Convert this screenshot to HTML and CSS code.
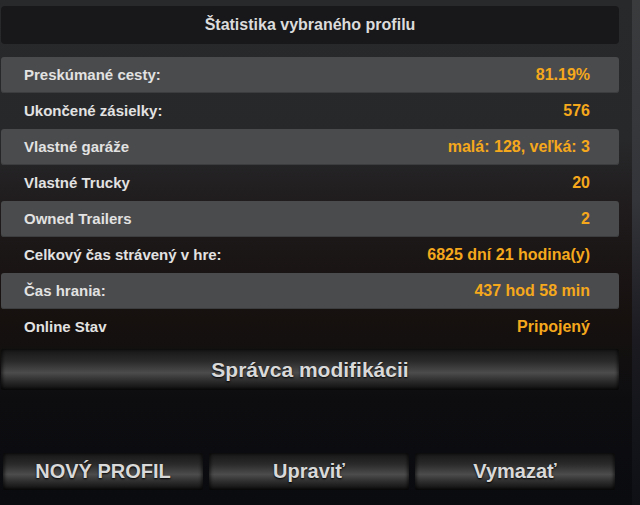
FILE: index.html
```html
<!DOCTYPE html>
<html lang="sk">
<head>
    <meta charset="UTF-8">
    <title>Štatistika profilu</title>
    <link rel="stylesheet" href="styles.css">
</head>
<body>
    <div class="screen">
        <div class="panel">
            <div class="title">Štatistika vybraného profilu</div>
            <div class="stats">
                <div class="row shaded"><span>Preskúmané cesty:</span><span class="value">81.19%</span></div>
                <div class="row"><span>Ukončené zásielky:</span><span class="value">576</span></div>
                <div class="row shaded"><span>Vlastné garáže</span><span class="value">malá: 128, veľká: 3</span></div>
                <div class="row"><span>Vlastné Trucky</span><span class="value">20</span></div>
                <div class="row shaded"><span>Owned Trailers</span><span class="value">2</span></div>
                <div class="row"><span>Celkový čas strávený v hre:</span><span class="value">6825 dní 21 hodina(y)</span></div>
                <div class="row shaded"><span>Čas hrania:</span><span class="value">437 hod 58 min</span></div>
                <div class="row"><span>Online Stav</span><span class="value">Pripojený</span></div>
            </div>
            <button class="btn mods">Správca modifikácii</button>
            <div class="actions">
                <button class="btn">NOVÝ PROFIL</button>
                <button class="btn">Upraviť</button>
                <button class="btn">Vymazať</button>
            </div>
        </div>
        <div class="strip"></div>
    </div>
</body>
</html>
```

FILE: styles.css
```css
html, body {
    margin: 0;
    height: 100%;
}
body {
    font-family: "Liberation Sans", Arial, sans-serif;
    background: linear-gradient(to bottom, #28292b 0px, #27282a 140px, #1e191a 220px, #16110f 320px, #0d0d10 400px, #0a0b0f 505px);
    overflow: hidden;
}
.screen {
    display: flex;
    height: 505px;
}
.panel {
    width: 618px;
    margin-left: 1px;
    padding-top: 6px;
    display: flex;
    flex-direction: column;
}
.strip {
    width: 8px;
    margin-left: 13px;
    background: linear-gradient(to bottom, #3a3b3d 0px, #34353a 200px, #1a1a20 340px, #0e1016 505px);
}
.title {
    height: 38px;
    background: #18181a;
    border-radius: 4px;
    color: #dcdcdc;
    font-weight: bold;
    font-size: 16px;
    display: flex;
    align-items: center;
    justify-content: center;
}
.stats {
    margin-top: 13px;
}
.row {
    height: 36px;
    line-height: 36px;
    display: flex;
    align-items: baseline;
    justify-content: space-between;
    padding: 0 29px 0 23px;
    color: #e2e2e2;
    font-weight: bold;
    font-size: 15px;
    border-radius: 3px;
}
.row.shaded {
    background: #4a4b4c;
    box-shadow: inset 0 -1px 0 #3c3d3e;
}
.value {
    color: #f5a81c;
    font-size: 16px;
}
.btn {
    font-family: inherit;
    font-weight: bold;
    font-size: 20px;
    color: #d9d9d9;
    text-shadow: 0 1px 2px #000;
    border: none;
    border-radius: 3px;
    padding: 0;
    background: linear-gradient(to bottom, #161616 0%, #2a2a2a 30%, #4c4c4c 58%, #2c2c2c 78%, #0c0c0c 100%);
    box-shadow: inset 2px 0 3px rgba(0,0,0,0.5), inset -2px 0 3px rgba(0,0,0,0.5);
    cursor: pointer;
}
.mods {
    margin-top: 4px;
    height: 41px;
    width: 618px;
    font-size: 21px;
}
.actions {
    margin-top: 63px;
    display: flex;
    gap: 6px;
    padding-left: 2px;
}
.actions .btn {
    width: 200px;
    height: 37px;
}
```
